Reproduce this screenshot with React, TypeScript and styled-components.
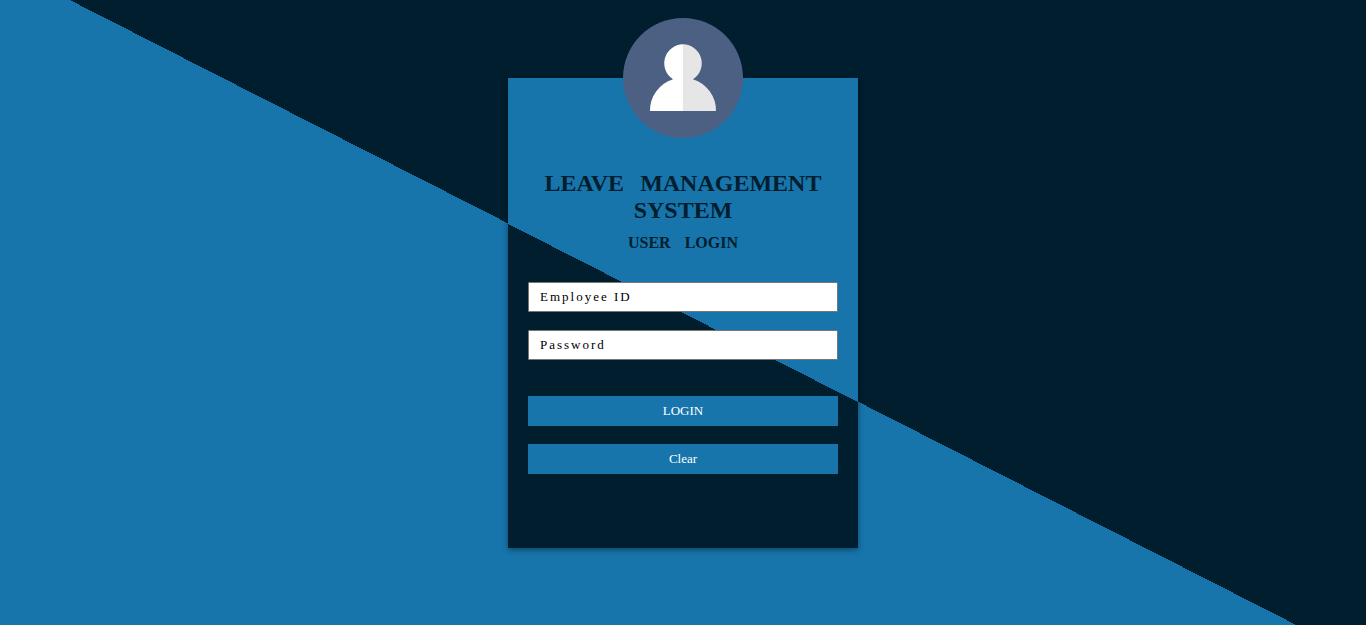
import React from "react";
import styled, { createGlobalStyle } from "styled-components";

const blue = "#1775ac";
const navy = "#001e2e";

const GlobalStyle = createGlobalStyle`
  *, *::before, *::after { box-sizing: border-box; }
  body {
    margin: 0;
    font-family: "Liberation Serif", "Times New Roman", serif;
  }
`;

const Page = styled.main`
  min-height: 100vh;
  display: flex;
  align-items: center;
  justify-content: center;
  padding: 61px 16px 60px;
  background: linear-gradient(27deg, ${blue} 50%, ${navy} 50%);
`;

const Card = styled.section`
  width: 100%;
  max-width: 350px;
  min-height: 470px;
  padding: 0 20px 20px;
  display: flex;
  flex-direction: column;
  background: linear-gradient(27deg, ${navy} 50%, ${blue} 50%);
  box-shadow: 0 2px 6px rgba(0, 0, 0, 0.4);
`;

const Avatar = styled.svg`
  width: 120px;
  height: 120px;
  margin: -60px auto 32px;
  flex: none;
`;

const Title = styled.h1`
  margin: 0;
  color: ${navy};
  font-size: 24px;
  line-height: 27px;
  text-align: center;
  word-spacing: 10px;
`;

const Subtitle = styled.h2`
  margin: 10px 0 30px;
  color: ${navy};
  font-size: 16px;
  line-height: 18px;
  text-align: center;
  word-spacing: 10px;
`;

const Form = styled.form`
  display: flex;
  flex-direction: column;
  gap: 18px;
`;

const Field = styled.input`
  width: 100%;
  height: 30px;
  padding: 0 11px;
  border: 1px solid #767676;
  border-radius: 1px;
  background: #fff;
  color: #000;
  font-family: inherit;
  font-size: 13px;
  letter-spacing: 2px;

  &::placeholder {
    color: #000;
    opacity: 1;
  }
`;

const Actions = styled.div`
  display: flex;
  flex-direction: column;
  gap: 18px;
  margin-top: 18px;
`;

const Button = styled.button`
  height: 30px;
  padding: 0;
  border: 0;
  background: ${blue};
  color: #fff;
  font-family: inherit;
  font-size: 13px;
  cursor: pointer;
`;

export default function App() {
  return (
    <>
      <GlobalStyle />
      <Page>
        <Card>
          <Avatar viewBox="0 0 120 120" aria-hidden="true">
            <circle cx="60" cy="60" r="60" fill="#4c6084" />
            <path d="M60 26.3A19 19 0 0 0 50 61.3A33 33 0 0 0 27 93H60Z" fill="#fff" />
            <path d="M60 26.3A19 19 0 0 1 70 61.3A33 33 0 0 1 93 93H60Z" fill="#e6e6e6" />
          </Avatar>
          <Title>LEAVE MANAGEMENT SYSTEM</Title>
          <Subtitle>USER LOGIN</Subtitle>
          <Form onSubmit={(event) => event.preventDefault()}>
            <Field type="text" placeholder="Employee ID" aria-label="Employee ID" />
            <Field type="password" placeholder="Password" aria-label="Password" />
            <Actions>
              <Button type="submit">LOGIN</Button>
              <Button type="reset">Clear</Button>
            </Actions>
          </Form>
        </Card>
      </Page>
    </>
  );
}
